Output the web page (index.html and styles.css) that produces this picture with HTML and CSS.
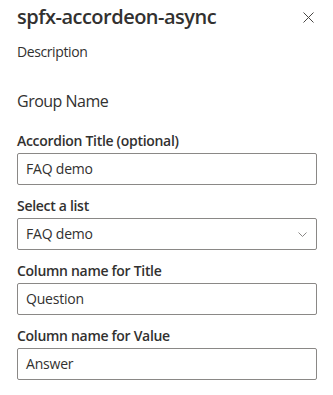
FILE: index.html
```html
<!DOCTYPE html>
<html lang="en">
<head>
  <meta charset="UTF-8" />
  <meta name="viewport" content="width=device-width, initial-scale=1.0"/>
  <title>spfx-accordeon-async</title>
  <link rel="stylesheet" href="styles.css">
</head>
<body>

<div class="pane">
  <div class="header">
    <h1 class="title">spfx-accordeon-async</h1>
    <button class="close" aria-label="Close">
      <svg width="11" height="11" viewBox="0 0 11 11">
        <path d="M0.5 0.5 L10.5 10.5 M10.5 0.5 L0.5 10.5" stroke="#484644" stroke-width="1" fill="none"/>
      </svg>
    </button>
  </div>

  <div class="description">Description</div>

  <div class="group-name">Group Name</div>

  <div class="field">
    <label class="label">Accordion Title (optional)</label>
    <div class="input">FAQ demo</div>
  </div>

  <div class="field">
    <label class="label">Select a list</label>
    <div class="input select">
      <span>FAQ demo</span>
      <svg width="9" height="5" viewBox="0 0 9 5">
        <path d="M0.5 0.5 L4.5 4.5 L8.5 0.5" stroke="#8a8886" stroke-width="1" fill="none"/>
      </svg>
    </div>
  </div>

  <div class="field">
    <label class="label">Column name for Title</label>
    <div class="input">Question</div>
  </div>

  <div class="field">
    <label class="label">Column name for Value</label>
    <div class="input">Answer</div>
  </div>
</div>

</body>
</html>
```

FILE: styles.css
```css
body {
  font-family: 'Segoe UI', 'Open Sans', sans-serif;
  background: #ffffff;
  color: #323130;
  margin: 0;
}
.pane {
  padding: 0 16px 0 17px;
}
.header {
  display: flex;
  align-items: center;
  justify-content: space-between;
  height: 32px;
  padding-top: 1px;
}
.title {
  font-size: 20px;
  font-weight: 600;
  line-height: 28px;
  letter-spacing: -0.5px;
  margin: 0;
}
.close {
  border: none;
  background: none;
  padding: 0;
  margin-right: 3px;
  display: flex;
}
.description {
  font-size: 14px;
  line-height: 20px;
  letter-spacing: -0.4px;
  margin-top: 9px;
}
.group-name {
  font-size: 16px;
  line-height: 22px;
  letter-spacing: -0.5px;
  margin-top: 28px;
  height: 33px;
}
.field {
  margin-bottom: 3px;
}
.label {
  display: block;
  font-size: 14px;
  font-weight: 600;
  line-height: 20px;
  letter-spacing: -0.3px;
  padding: 8px 0 2px;
}
.input {
  box-sizing: border-box;
  height: 32px;
  border: 1px solid #8a8886;
  border-radius: 2px;
  padding: 0 8px;
  font-size: 14px;
  line-height: 30px;
  letter-spacing: -0.2px;
}
.select {
  display: flex;
  align-items: center;
  justify-content: space-between;
  padding-right: 9px;
}
```
